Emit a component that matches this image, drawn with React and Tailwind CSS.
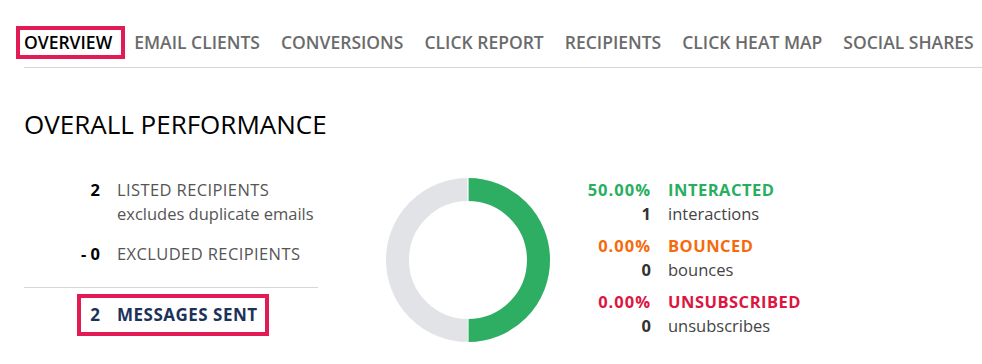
import React from "react";

const tabs = ["OVERVIEW", "EMAIL CLIENTS", "CONVERSIONS", "CLICK REPORT", "RECIPIENTS", "CLICK HEAT MAP", "SOCIAL SHARES"];

function Donut() {
  const r = 70.5;
  const c = 2 * Math.PI * r;
  return (
    <svg width="166" height="166" viewBox="0 0 166 166">
      <g transform="rotate(-90 83 83)">
        <circle cx="83" cy="83" r={r} fill="none" stroke="#e2e3e7" strokeWidth="23" />
        <circle
          cx="83"
          cy="83"
          r={r}
          fill="none"
          stroke="#2eae62"
          strokeWidth="23"
          strokeDasharray={`${c / 2} ${c / 2}`}
        />
      </g>
      <line x1="83" y1="0" x2="83" y2="26" stroke="#fff" strokeWidth="1.2" />
      <line x1="83" y1="140" x2="83" y2="166" stroke="#fff" strokeWidth="1.2" />
    </svg>
  );
}

export default function App() {
  return (
    <div className="w-[982px] h-[364px] bg-white overflow-hidden pl-[24px]" style={{ fontFamily: '"Open Sans", "Noto Sans", sans-serif' }}>
      <div className="flex items-end h-[68px] border-b border-[#d6d6d6]">
        <div className="flex -ml-[8px] gap-[5px] mb-[8px]">
          {tabs.map((t, i) => (
            <div
              key={t}
              className={
                "border-[4px] h-[33px] flex items-center text-[17.5px] font-semibold whitespace-nowrap " +
                (i === 0
                  ? "border-[#e31b54] text-black pl-[4px] pr-[9px] -mr-[4px]"
                  : "border-transparent text-[#6b6b6b] px-[4px]")
              }
            >
              {t}
            </div>
          ))}
        </div>
      </div>

      <div className="mt-[38px] text-[26px] leading-[36px] text-black">OVERALL PERFORMANCE</div>

      <div className="flex mt-[36px]">
        <div className="w-[294px] text-[16.5px] leading-[24px]">
          <div className="flex">
            <div className="w-[76px] text-right font-bold text-black">2</div>
            <div className="ml-[17px] text-[#555]">
              <div className="tracking-[0.4px]">LISTED RECIPIENTS</div>
              <div>excludes duplicate emails</div>
            </div>
          </div>
          <div className="flex mt-[16px]">
            <div className="w-[76px] text-right font-bold text-black">- 0</div>
            <div className="ml-[17px] text-[#555] tracking-[0.4px]">EXCLUDED RECIPIENTS</div>
          </div>
          <div className="mt-[21px] border-t border-[#d6d6d6]" />
          <div className="flex mt-[6px] ml-[53px] w-[192px] h-[42px] border-[4px] border-[#e31b54] items-center font-bold text-[#1b3358] text-[17px]">
            <div className="w-[19px] text-right">2</div>
            <div className="ml-[17px] tracking-[0.5px]">MESSAGES SENT</div>
          </div>
        </div>

        <div className="ml-[67px] -mt-[1px]">
          <Donut />
        </div>

        <div className="text-[16.5px] leading-[24px]">
          <Stat pct="50.00%" label="INTERACTED" color="text-[#27ae60]" n="1" sub="interactions" />
          <div className="h-[8px]" />
          <Stat pct="0.00%" label="BOUNCED" color="text-[#f56b0c]" n="0" sub="bounces" />
          <div className="h-[8px]" />
          <Stat pct="0.00%" label="UNSUBSCRIBED" color="text-[#dc1541]" n="0" sub="unsubscribes" />
        </div>
      </div>
    </div>
  );
}

function Stat({ pct, label, color, n, sub }) {
  return (
    <div>
      <div className="flex">
        <div className={"w-[100px] text-right font-bold tracking-[1px] " + color}>{pct}</div>
        <div className={"ml-[17px] font-bold tracking-[0.5px] " + color}>{label}</div>
      </div>
      <div className="flex">
        <div className="w-[100px] text-right font-bold text-[#333]">{n}</div>
        <div className="ml-[17px] text-[#444]">{sub}</div>
      </div>
    </div>
  );
}
